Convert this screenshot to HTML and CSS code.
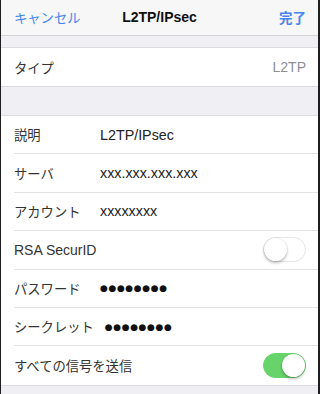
FILE: index.html
```html
<!DOCTYPE html>
<html lang="ja">
<head>
<meta charset="utf-8">
<link rel="stylesheet" href="styles.css">
</head>
<body>
<div class="screen">
  <header class="nav">
    <span class="nav-btn">キャンセル</span>
    <span class="nav-title">L2TP/IPsec</span>
    <span class="nav-btn done">完了</span>
  </header>
  <div class="gap gap-top"></div>
  <section class="group">
    <div class="row"><div class="cell"><span class="label">タイプ</span><span class="detail">L2TP</span></div></div>
  </section>
  <div class="gap gap-mid"></div>
  <section class="group">
    <div class="row"><div class="cell"><span class="label fixed">説明</span><span class="value">L2TP/IPsec</span></div></div>
    <div class="row"><div class="cell"><span class="label fixed">サーバ</span><span class="value">xxx.xxx.xxx.xxx</span></div></div>
    <div class="row"><div class="cell"><span class="label fixed">アカウント</span><span class="value">xxxxxxxx</span></div></div>
    <div class="row"><div class="cell"><span class="label latin">RSA SecurID</span><span class="switch"><span class="knob"></span></span></div></div>
    <div class="row"><div class="cell"><span class="label fixed">パスワード</span><span class="value dots">●●●●●●●●</span></div></div>
    <div class="row"><div class="cell"><span class="label fixed">シークレット</span><span class="value dots">●●●●●●●●</span></div></div>
    <div class="row last"><div class="cell"><span class="label">すべての信号を送信</span><span class="switch on"><span class="knob"></span></span></div></div>
  </section>
  <div class="gap gap-bottom"></div>
</div>
</body>
</html>
```

FILE: styles.css
```css
* { box-sizing: border-box; }
html, body { margin: 0; padding: 0; }
body {
  width: 320px;
  height: 394px;
  overflow: hidden;
  background: #efeff4;
  font-family: "Liberation Sans", "Noto Sans CJK JP", sans-serif;
  font-size: 13.3px;
  color: #2b2b2b;
}
.screen {
  width: 320px;
  height: 394px;
  border-left: 1px solid #1e1e1e;
  border-right: 2px solid #1e1e1e;
  background: #efeff4;
  display: flex;
  flex-direction: column;
}
.nav {
  height: 36px;
  flex: none;
  background: #f7f7f8;
  border-bottom: 1px solid #d4d4d8;
  display: flex;
  align-items: center;
  justify-content: space-between;
  padding: 0 12px 1px 13px;
  position: relative;
}
.nav-btn {
  color: #4585ef;
  font-size: 13.3px;
}
.nav-btn.done { font-weight: 600; font-size: 13.5px; }
.nav-title {
  position: absolute;
  left: 0;
  right: 0;
  text-align: center;
  font-weight: bold;
  font-size: 14px;
  color: #111;
  pointer-events: none;
}
.gap { flex: none; }
.gap-top { height: 11px; }
.gap-mid { height: 28px; }
.gap-bottom { flex: 1; }
.group {
  flex: none;
  background: #fff;
  border-top: 1px solid #dcdce0;
  border-bottom: 1px solid #dcdce0;
}
.group:first-of-type .row { height: 38px; }
.row {
  height: 38.4px;
  padding-left: 13px;
}
.cell {
  height: 100%;
  display: flex;
  align-items: center;
  padding-right: 12px;
  border-bottom: 1px solid #e3e3e6;
}
.row.last .cell, .group .row:only-child .cell { border-bottom: none; }
.label {
  flex: none;
  color: #333;
  margin-right: 11px;
}
.label.latin { font-size: 14px; }
.label.fixed { min-width: 75px; }
.value { color: #222; font-size: 14.3px; }
.detail {
  margin-left: auto;
  color: #8e8e93;
  font-size: 14px;
}
.dots {
  font-family: "DejaVu Sans", sans-serif;
  font-size: 9px;
  letter-spacing: 0.6px;
  color: #111;
}
.switch {
  margin-left: auto;
  width: 43px;
  height: 25px;
  border-radius: 13px;
  border: 1.5px solid #e5e5ea;
  background: #fff;
  display: flex;
  align-items: center;
  padding: 0;
}
.switch .knob {
  width: 23px;
  height: 23px;
  border-radius: 50%;
  background: #fff;
  box-shadow: 0 2px 3px rgba(0,0,0,0.25), 0 0 0 0.5px rgba(0,0,0,0.08);
}
.switch.on {
  background: #67d36b;
  border-color: #67d36b;
  justify-content: flex-end;
}
```
